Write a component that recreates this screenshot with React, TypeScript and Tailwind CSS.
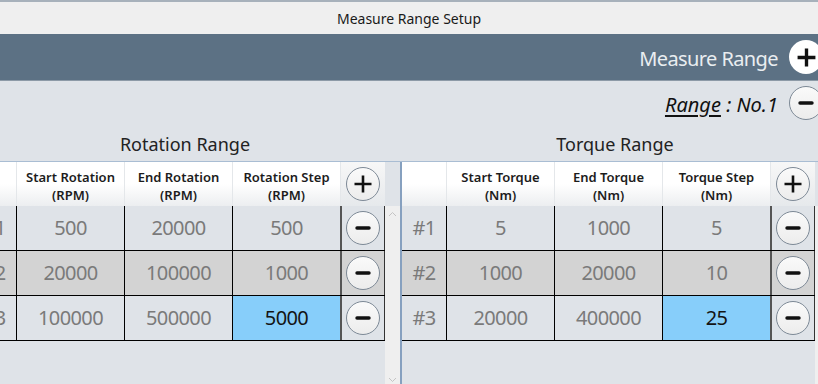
import React from 'react';

type Row = { id: string; start: string; end: string; step: string };

const rotationRows: Row[] = [
  { id: '#1', start: '500', end: '20000', step: '500' },
  { id: '#2', start: '20000', end: '100000', step: '1000' },
  { id: '#3', start: '100000', end: '500000', step: '5000' },
];

const torqueRows: Row[] = [
  { id: '#1', start: '5', end: '1000', step: '5' },
  { id: '#2', start: '1000', end: '20000', step: '10' },
  { id: '#3', start: '20000', end: '400000', step: '25' },
];

const PlusIcon = ({ size = 20, stroke = 2.6 }: { size?: number; stroke?: number }) => (
  <svg width={size} height={size} viewBox="0 0 20 20">
    <path d="M10 1.5v17M1.5 10h17" stroke="#111" strokeWidth={stroke} strokeLinecap="butt" />
  </svg>
);

const MinusIcon = () => (
  <svg width="16" height="16" viewBox="0 0 16 16">
    <path d="M2 8h12" stroke="#111" strokeWidth="3.4" strokeLinecap="round" />
  </svg>
);

const CircleButton = ({ plus }: { plus?: boolean }) => (
  <div className="w-[34px] h-[34px] rounded-full border border-[#7d8996] bg-gradient-to-b from-[#fafafa] to-[#ececec] flex items-center justify-center">
    {plus ? <PlusIcon /> : <MinusIcon />}
  </div>
);

type TableProps = {
  title: string;
  headers: [string, string][];
  rows: Row[];
};

const RangePanel = ({ title, headers, rows }: TableProps) => (
  <div className="w-[430px] flex flex-col">
    <div className="h-[36px] pt-[3px] flex items-center justify-center text-[18px] text-[#222]">
      {title}
    </div>
    <div className="flex h-[223px] border-t border-[#a9bdd3]">
      <div className="w-[2px] bg-[#86a0bf]" />
      <div className="w-[413px]">
        {/* header */}
        <div className="grid grid-cols-[44px_108px_108px_108px_45px] h-[44px] bg-gradient-to-b from-white via-white to-[#eceef0]">
          <div />
          {headers.map(([a, b]) => (
            <div
              key={a}
              className="border-l border-[#e4e7ea] pt-[3px] flex flex-col items-center justify-center text-[13px] font-semibold leading-[18px] text-[#1c1c1c]"
            >
              <span>{a}</span>
              <span>{b}</span>
            </div>
          ))}
          <div className="border-l border-[#e4e7ea] bg-gradient-to-b from-[#f7f7f7] to-[#e6e9ec] flex items-center justify-center">
            <CircleButton plus />
          </div>
        </div>
        {/* rows */}
        {rows.map((r, i) => {
          const bg = i === 1 ? 'bg-[#d3d3d3]' : 'bg-[#dfe3e8]';
          return (
            <div
              key={r.id}
              className={`grid grid-cols-[44px_108px_108px_108px_45px] h-[45px] border-b border-black text-[20px] tracking-[-0.6px] text-[#7a7a7a] ${bg}`}
            >
              <div className="flex items-center justify-center">{r.id}</div>
              <div className="border-l border-black flex items-center justify-center">{r.start}</div>
              <div className="border-l border-black flex items-center justify-center">{r.end}</div>
              <div
                className={`border-l border-black flex items-center justify-center ${
                  i === 2 ? 'bg-[#87cefa] text-[#141414]' : ''
                }`}
              >
                {r.step}
              </div>
              <div className="border-l-2 border-l-[#555] border-r border-r-[#333] flex items-center justify-center">
                <CircleButton />
              </div>
            </div>
          );
        })}
      </div>
      {/* scrollbar */}
      <div className="w-[15px] flex flex-col">
        <div className="h-[44px]" />
        <div className="flex-1 bg-[#efefef] flex flex-col items-center justify-between pt-[5px] pb-[1px]">
          <svg width="9" height="6" viewBox="0 0 9 6">
            <path d="M1 5l3.5-3.5L8 5" stroke="#c4c4c4" strokeWidth="1" fill="none" />
          </svg>
          <svg width="9" height="6" viewBox="0 0 9 6">
            <path d="M1 1l3.5 3.5L8 1" stroke="#c4c4c4" strokeWidth="1" fill="none" />
          </svg>
        </div>
      </div>
    </div>
  </div>
);

export default function App() {
  return (
    <div className="w-[818px] h-[384px] overflow-hidden bg-[#dfe3e8] font-['Noto_Sans',sans-serif]">
      {/* window title */}
      <div className="h-[34px] border-t-2 border-[#a7b1bb] bg-[#efefef] flex items-center justify-center text-[14px] text-[#1a1a1a]">
        Measure Range Setup
      </div>

      <div className="w-[860px] ml-[-30px]">
        {/* top bar */}
        <div className="h-[47px] bg-[#5c7184] border-b border-[#8d9aa7] flex items-center justify-end gap-[11px] pr-[7px]">
          <span className="pt-[4px] text-[20px] tracking-[-0.6px] text-[#e9edf0]">Measure Range</span>
          <div className="w-[34px] h-[34px] rounded-full bg-white flex items-center justify-center">
            <PlusIcon size={21} stroke={3.2} />
          </div>
        </div>

        {/* selected range */}
        <div className="h-[44px] flex items-center justify-end gap-[11px] pr-[7px]">
          <span className="pt-[3px] text-[20px] italic text-[#111]">
            <span className="underline underline-offset-[3px]">Range</span> : No.1
          </span>
          <CircleButton />
        </div>

        {/* tables */}
        <div className="flex">
          <RangePanel
            title="Rotation Range"
            headers={[
              ['Start Rotation', '(RPM)'],
              ['End Rotation', '(RPM)'],
              ['Rotation Step', '(RPM)'],
            ]}
            rows={rotationRows}
          />
          <RangePanel
            title="Torque Range"
            headers={[
              ['Start Torque', '(Nm)'],
              ['End Torque', '(Nm)'],
              ['Torque Step', '(Nm)'],
            ]}
            rows={torqueRows}
          />
        </div>
      </div>
    </div>
  );
}
